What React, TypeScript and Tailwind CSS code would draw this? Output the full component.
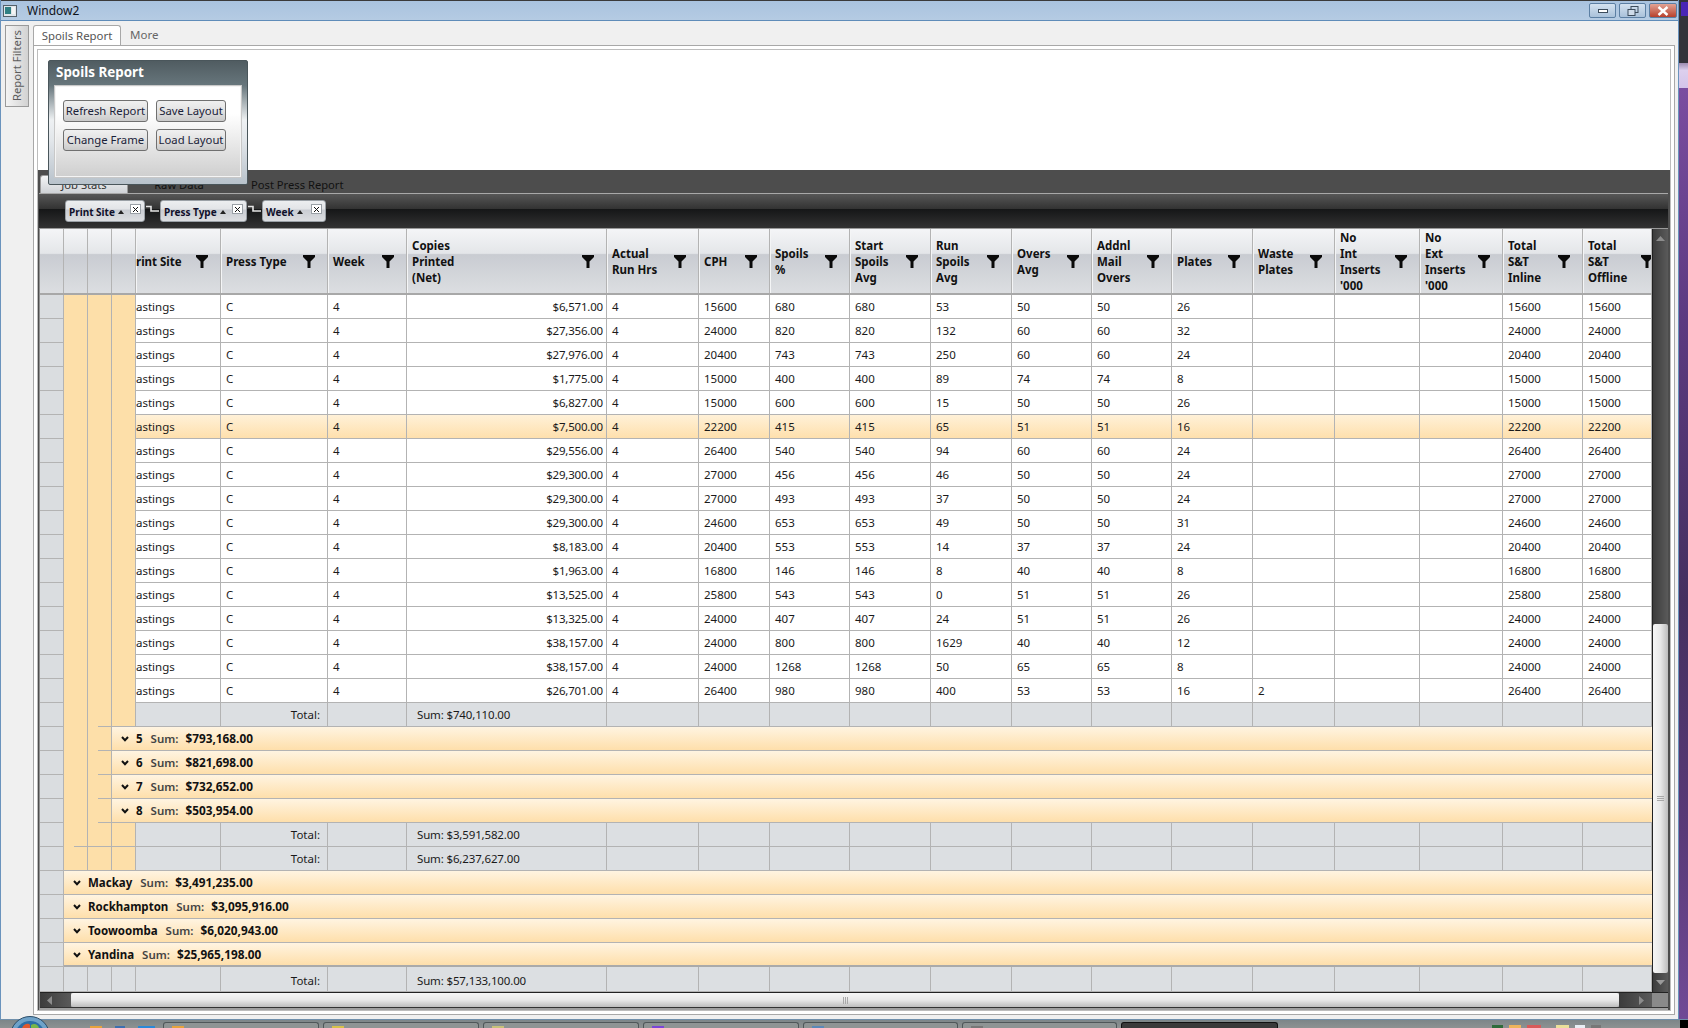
import React from "react";

const GRID =
  "grid grid-cols-[24px_24px_24px_24px_85px_107px_79px_200px_92px_71px_80px_81px_81px_80px_80px_81px_82px_85px_83px_80px_69px]";
const FONT = "font-['Noto_Sans',sans-serif]";

const HEADERS: string[][] = [
  ["rint Site"],
  ["Press Type"],
  ["Week"],
  ["Copies", "Printed", "(Net)"],
  ["Actual", "Run Hrs"],
  ["CPH"],
  ["Spoils", "%"],
  ["Start", "Spoils", "Avg"],
  ["Run", "Spoils", "Avg"],
  ["Overs", "Avg"],
  ["Addnl", "Mail", "Overs"],
  ["Plates"],
  ["Waste", "Plates"],
  ["No", "Int", "Inserts", "'000"],
  ["No", "Ext", "Inserts", "'000"],
  ["Total", "S&T", "Inline"],
  ["Total", "S&T", "Offline"],
];

type R = [string, string, string, string, string, string, string, string, string?];
const ROWS: R[] = [
  ["$6,571.00", "15600", "680", "680", "53", "50", "50", "26"],
  ["$27,356.00", "24000", "820", "820", "132", "60", "60", "32"],
  ["$27,976.00", "20400", "743", "743", "250", "60", "60", "24"],
  ["$1,775.00", "15000", "400", "400", "89", "74", "74", "8"],
  ["$6,827.00", "15000", "600", "600", "15", "50", "50", "26"],
  ["$7,500.00", "22200", "415", "415", "65", "51", "51", "16"],
  ["$29,556.00", "26400", "540", "540", "94", "60", "60", "24"],
  ["$29,300.00", "27000", "456", "456", "46", "50", "50", "24"],
  ["$29,300.00", "27000", "493", "493", "37", "50", "50", "24"],
  ["$29,300.00", "24600", "653", "653", "49", "50", "50", "31"],
  ["$8,183.00", "20400", "553", "553", "14", "37", "37", "24"],
  ["$1,963.00", "16800", "146", "146", "8", "40", "40", "8"],
  ["$13,525.00", "25800", "543", "543", "0", "51", "51", "26"],
  ["$13,325.00", "24000", "407", "407", "24", "51", "51", "26"],
  ["$38,157.00", "24000", "800", "800", "1629", "40", "40", "12"],
  ["$38,157.00", "24000", "1268", "1268", "50", "65", "65", "8"],
  ["$26,701.00", "26400", "980", "980", "400", "53", "53", "16", "2"],
];

const LINE = "border-[#b3b3b3]";

function Funnel({ clipped }: { clipped?: boolean }) {
  return (
    <svg width="12" height="13" viewBox="0 0 12 13" className={`shrink-0 ${clipped ? "-mr-[14px]" : ""}`}>
      <path d="M0 0H12V2L7.5 6.5V13H4.5V6.5L0 2Z" fill="#0a0a0a" />
    </svg>
  );
}

function Chevron() {
  return (
    <svg width="8" height="6" viewBox="0 0 8 6" className="shrink-0">
      <path d="M1 1L4 4.2L7 1" fill="none" stroke="#111" strokeWidth="2" />
    </svg>
  );
}

function Gutter() {
  return <div className={`bg-[#dadde0] border-r border-b ${LINE}`} />;
}

function Indent({ line = "", width = "" }: { line?: string; width?: string }) {
  return (
    <div className={`bg-[#fddfa9] border-r ${LINE} flex flex-col justify-end items-end ${width}`}>
      {line && <div className={`h-px bg-[#b3b3b3] ${line}`} />}
    </div>
  );
}

function HeaderCell({ lines, first, last }: { lines: string[]; first?: boolean; last?: boolean }) {
  return (
    <div
      className={`flex items-center justify-between ${first ? "pl-0" : "pl-[5px]"} pr-[12px] border-r border-[#b3b3b3] shadow-[inset_1px_0_0_#f4f5f6] overflow-hidden min-w-0`}
    >
      <div className="font-bold text-[11.5px] leading-[16px] text-[#111] whitespace-nowrap pt-[2px]">
        {lines.map((l) => (
          <div key={l}>{l}</div>
        ))}
      </div>
      <Funnel clipped={last} />
    </div>
  );
}

function Header() {
  return (
    <div
      className={`${GRID} h-[66px] border-b-2 border-[#a8a8a8] bg-[linear-gradient(#f4f5f7_0%,#e4e6e9_38%,#c9ccd2_40%,#dcdee1_100%)]`}
    >
      <div className={`border-r ${LINE}`} />
      <div className={`border-r ${LINE}`} />
      <div className={`border-r ${LINE}`} />
      <div className={`border-r ${LINE}`} />
      {HEADERS.map((h, i) => (
        <HeaderCell key={i} lines={h} first={i === 0} last={i === HEADERS.length - 1} />
      ))}
    </div>
  );
}

function DataCell({ children, right, first }: { children?: React.ReactNode; right?: boolean; first?: boolean }) {
  return (
    <div
      className={`flex items-center pt-[1px] border-r border-b ${LINE} whitespace-nowrap overflow-hidden ${
        right ? "justify-end pr-[3px] tracking-[-0.2px]" : first ? "pl-0" : "pl-[5px]"
      }`}
    >
      {children}
    </div>
  );
}

function DataRow({ r, hi }: { r: R; hi?: boolean }) {
  const bg = hi ? "bg-[linear-gradient(#fff1d8,#fedfab)]" : "bg-white";
  return (
    <div className={`${GRID} h-[24px]`}>
      <Gutter />
      <Indent />
      <Indent />
      <Indent />
      <div className={`col-[5/-1] grid grid-cols-subgrid ${bg}`}>
        <DataCell first>astings</DataCell>
        <DataCell>C</DataCell>
        <DataCell>4</DataCell>
        <DataCell right>{r[0]}</DataCell>
        <DataCell>4</DataCell>
        <DataCell>{r[1]}</DataCell>
        <DataCell>{r[2]}</DataCell>
        <DataCell>{r[3]}</DataCell>
        <DataCell>{r[4]}</DataCell>
        <DataCell>{r[5]}</DataCell>
        <DataCell>{r[6]}</DataCell>
        <DataCell>{r[7]}</DataCell>
        <DataCell>{r[8]}</DataCell>
        <DataCell />
        <DataCell />
        <DataCell>{r[1]}</DataCell>
        <DataCell>{r[1]}</DataCell>
      </div>
    </div>
  );
}

function TotalRow({
  sum,
  indents,
  last,
}: {
  sum: string;
  indents: React.ReactNode;
  last?: boolean;
}) {
  const cell = `bg-[#dcdfe2] border-r border-b ${LINE}`;
  return (
    <div className={`${GRID} ${last ? "h-[25px]" : "h-[24px]"}`}>
      <Gutter />
      {indents}
      <div className={cell} />
      <div className={`${cell} flex items-center justify-end pr-[7px] ${last ? "pt-[3px]" : ""}`}>Total:</div>
      <div className={cell} />
      <div className={`${cell} flex items-center pl-[10px] whitespace-nowrap tracking-[-0.15px] ${last ? "pt-[3px]" : ""}`}>
        {sum}
      </div>
      {Array.from({ length: 13 }).map((_, i) => (
        <div key={i} className={cell} />
      ))}
    </div>
  );
}

function GroupRow({ label, sum, level, thick }: { label: string; sum: string; level: 1 | 3; thick?: boolean }) {
  return (
    <div className="flex h-[24px]">
      <div className={`w-[24px] bg-[#dadde0] border-r border-b ${LINE}`} />
      {level === 3 && (
        <>
          <Indent width="w-[24px]" />
          <Indent width="w-[24px]" line="w-[13px]" />
        </>
      )}
      <div
        className={`flex-1 flex items-center pl-[9px] ${
          thick ? "border-b-2 border-[#aaaaaa] pt-[1px]" : `border-b ${LINE}`
        } bg-[linear-gradient(#fff4e1,#fedfab)] text-[11.5px] whitespace-nowrap text-[#111]`}
      >
        <Chevron />
        <span className="font-bold ml-[7px]">{label}</span>
        <span className="font-semibold text-[#444] ml-[8px]">Sum:</span>
        <span className="font-bold ml-[7px] text-[11.8px]">{sum}</span>
      </div>
    </div>
  );
}

function VScroll() {
  return (
    <div className="w-[16px] border-l border-[#222] bg-[linear-gradient(90deg,#3c3c3c,#5a5a5a)] flex flex-col">
      <div className="h-[395px] flex justify-center pt-[7px]">
        <svg width="9" height="5" viewBox="0 0 9 5">
          <path d="M4.5 0L9 5H0Z" fill="#8c8c8c" />
        </svg>
      </div>
      <div className="h-[349px] rounded-[2px] bg-[linear-gradient(90deg,#f6f6f6,#e8e8e8_50%,#bdbdbd)] flex flex-col items-center pt-[172px] gap-[1px]">
        <div className="w-[7px] h-px bg-[#a8a8a8]" />
        <div className="w-[7px] h-px bg-[#a8a8a8]" />
        <div className="w-[7px] h-px bg-[#a8a8a8]" />
      </div>
      <div className="flex-1 flex justify-center items-center">
        <svg width="9" height="5" viewBox="0 0 9 5">
          <path d="M4.5 5L9 0H0Z" fill="#9a9a9a" />
        </svg>
      </div>
    </div>
  );
}

function HScroll() {
  return (
    <div className="h-[16px] flex border-t border-[#222] border-b border-b-[#333]">
      <div className="w-[31px] bg-[linear-gradient(90deg,#3c3c3c,#5a5a5a)] flex items-center pl-[7px]">
        <svg width="5" height="9" viewBox="0 0 5 9">
          <path d="M0 4.5L5 0V9Z" fill="#8c8c8c" />
        </svg>
      </div>
      <div className="w-[1548px] rounded-[2px] bg-[linear-gradient(#f6f6f6,#e8e8e8_50%,#bdbdbd)] flex items-center justify-center gap-[1px]">
        <div className="w-px h-[7px] bg-[#a8a8a8]" />
        <div className="w-px h-[7px] bg-[#a8a8a8]" />
        <div className="w-px h-[7px] bg-[#a8a8a8]" />
      </div>
      <div className="flex-1 bg-[linear-gradient(90deg,#3c3c3c,#5a5a5a)] flex items-center justify-end pr-[8px]">
        <svg width="5" height="9" viewBox="0 0 5 9">
          <path d="M5 4.5L0 0V9Z" fill="#8c8c8c" />
        </svg>
      </div>
      <div className="w-[16px] bg-[#8a8a8a]" />
    </div>
  );
}

function Chip({ label, w }: { label: string; w: string }) {
  return (
    <div
      className={`${w} h-[22px] rounded-[3px] border border-[#9aa0a6] bg-[linear-gradient(#eceef0_0%,#e2e4e7_40%,#c9ccd2_45%,#dcdee1_100%)] flex pl-[3px] pr-[3px]`}
    >
      <span className="text-[10px] font-bold text-[#10102a] self-center whitespace-nowrap pt-[3px]">{label}</span>
      <svg width="6" height="4" viewBox="0 0 6 4" className="self-center ml-[3px] mt-[1px]">
        <path d="M3 0L6 4H0Z" fill="#222" />
      </svg>
      <div className="ml-auto mt-[3px] w-[11px] h-[10px] bg-white border border-[#9aa0a6] flex items-center justify-center">
        <svg width="7" height="7" viewBox="0 0 7 7">
          <path d="M1 1L6 6M6 1L1 6" stroke="#111" strokeWidth="1" />
        </svg>
      </div>
    </div>
  );
}

function Connector() {
  return (
    <svg width="15" height="8" viewBox="0 0 15 8" className="shrink-0">
      <path d="M1 1.5H6V6H14" fill="none" stroke="#e4e4e4" strokeWidth="1.6" />
    </svg>
  );
}

function RibbonButton({ children, w }: { children: React.ReactNode; w: string }) {
  return (
    <div
      className={`${w} h-[22px] rounded-[3px] border border-[#707070] bg-[linear-gradient(#f0f0f0,#e2e2e2_50%,#cacaca)] flex items-center justify-center text-[11.3px] text-[#1a2238] whitespace-nowrap`}
    >
      {children}
    </div>
  );
}

function WinBtn({ w, bg, children }: { w: string; bg: string; children: React.ReactNode }) {
  return (
    <div className={`${w} h-[15px] rounded-[2px] border border-[#5c7fa3] ${bg} flex items-center justify-center`}>
      {children}
    </div>
  );
}

function TaskButton({ w, color, dark }: { w: string; color?: string; dark?: boolean }) {
  return (
    <div
      className={`${w} h-[6px] rounded-t-[3px] border border-b-0 ${
        dark ? "border-[#111] bg-[#3a3a3a]" : "border-[#4f5759] bg-[#8e9494]"
      } pl-[8px] pt-[3px]`}
    >
      {color && <div className={`w-[12px] h-[3px] ${color}`} />}
    </div>
  );
}

export default function App() {
  const orange = `bg-[#fddfa9] border-r border-b ${LINE}`;
  const gray = `bg-[#dcdfe2] border-r border-b ${LINE}`;
  return (
    <div className={`${FONT} relative w-[1688px] h-[1028px] overflow-hidden flex flex-col text-[11.5px] text-[#1a1a1a]`}>
      <div className="flex h-[1019px]">
        {/* window */}
        <div className="w-[1679px] flex flex-col bg-[#f0f0f0] border-l border-r border-[#6a93bd]">
          {/* title bar */}
          <div className="h-[21px] border-t border-[#3a3a3a] border-b border-b-[#5f8cb9] bg-[linear-gradient(#a9c3df,#b5cbe3)] flex items-center pl-[2px] pr-[1px]">
            <svg width="14" height="12" viewBox="0 0 14 12" className="shrink-0">
              <rect x="0.5" y="0.5" width="13" height="11" fill="#dfe6ea" stroke="#55606a" />
              <rect x="2" y="2" width="6" height="7" fill="#2f7f83" />
              <rect x="9" y="2" width="3" height="7" fill="#f4f4f4" />
            </svg>
            <span className="ml-[10px] text-[12px] text-[#10131a]">Window2</span>
            <div className="ml-auto flex gap-[3px]">
              <WinBtn w="w-[27px]" bg="bg-[linear-gradient(#d4e2f0,#a9c1da)]">
                <div className="w-[10px] h-[4px] border border-[#3c4c5c] bg-white" />
              </WinBtn>
              <WinBtn w="w-[27px]" bg="bg-[linear-gradient(#d4e2f0,#a9c1da)]">
                <svg width="12" height="10" viewBox="0 0 12 10">
                  <rect x="4" y="0.5" width="7" height="6" fill="none" stroke="#3c4c5c" />
                  <rect x="1" y="3.5" width="7" height="6" fill="#cfdcea" stroke="#3c4c5c" />
                </svg>
              </WinBtn>
              <WinBtn w="w-[28px]" bg="bg-[linear-gradient(#e2a394,#b8402c)]">
                <svg width="12" height="10" viewBox="0 0 12 10">
                  <path d="M1.5 1L10.5 9M10.5 1L1.5 9" stroke="#fff" strokeWidth="2.4" />
                </svg>
              </WinBtn>
            </div>
          </div>

          {/* body */}
          <div className="flex-1 flex min-h-0 pt-[4px] pb-[4px]">
            <div className="w-[32px] pl-[4px]">
              <div className="w-[24px] h-[82px] border border-[#9a9a9a] bg-[linear-gradient(90deg,#f4f4f4,#d2d2d2)] flex items-center justify-center">
                <span className="[writing-mode:vertical-rl] rotate-180 text-[11.3px] text-[#5c5c5c] whitespace-nowrap">
                  Report Filters
                </span>
              </div>
            </div>

            <div className="w-[1642px] flex flex-col">
              {/* top tabs */}
              <div className="h-[20px] flex items-end">
                <div className="w-[88px] h-[20px] border border-b-0 border-[#a8a8a8] rounded-t-[3px] bg-white flex items-center justify-center text-[11.4px] text-[#555]">
                  Spoils Report
                </div>
                <div className="ml-[9px] h-[20px] flex items-center text-[11.5px] text-[#666]">More</div>
              </div>
              <div className="flex-1 min-h-0 border border-[#a8a8a8] bg-white p-[3px] flex flex-col">
                <div className="flex-1 min-h-0 border border-[#bdbdbd] flex flex-col bg-[#4d4d4d]">
                  <div className="h-[120px] bg-white" />
                  {/* inner tabs */}
                  <div className="h-[23px] flex items-end pl-[2px] text-[11.2px]">
                    <div className="w-[88px] h-[18px] rounded-t-[3px] border border-b-0 border-[#9a9a9a] bg-[linear-gradient(#f4f5f6,#cfd2d6)] flex items-center justify-center text-[#333] pt-[1px]">
                      Job Stats
                    </div>
                    <div className="w-[102px] h-[18px] flex items-center justify-center text-[#111] pt-[3px]">Raw Data</div>
                    <div className="ml-[21px] h-[18px] flex items-center text-[#111] pt-[3px]">Post Press Report</div>
                  </div>
                  {/* frame */}
                  <div className="flex-1 min-h-0 ml-[1px] mr-[2px] border-t border-[#a8a8a8] bg-[#8f8f8f] flex flex-col">
                    {/* group panel */}
                    <div className="h-[35px] border-b border-[#9a9a9a] bg-[linear-gradient(#575757_0%,#333_43%,#151617_44%,#333_100%)] flex items-start pl-[26px] pt-[6px]">
                      <Chip label="Print Site" w="w-[80px]" />
                      <div className="self-stretch flex items-center pb-[10px]"><Connector /></div>
                      <Chip label="Press Type" w="w-[87px]" />
                      <div className="self-stretch flex items-center pb-[10px]"><Connector /></div>
                      <Chip label="Week" w="w-[64px]" />
                    </div>
                    {/* grid + scrollbars */}
                    <div className="ml-[1px] flex h-[763px]">
                      <div className="w-[1612px] bg-white overflow-hidden flex flex-col">
                        <Header />
                        {ROWS.map((r, i) => (
                          <DataRow key={i} r={r} hi={i === 5} />
                        ))}
                        <TotalRow
                          sum="Sum: $740,110.00"
                          indents={
                            <>
                              <Indent />
                              <Indent line="w-[13px]" />
                              <div className={orange} />
                            </>
                          }
                        />
                        <GroupRow level={3} label="5" sum="$793,168.00" />
                        <GroupRow level={3} label="6" sum="$821,698.00" />
                        <GroupRow level={3} label="7" sum="$732,652.00" />
                        <GroupRow level={3} label="8" sum="$503,954.00" />
                        <TotalRow
                          sum="Sum: $3,591,582.00"
                          indents={
                            <>
                              <Indent line="w-[13px]" />
                              <div className={orange} />
                              <div className={orange} />
                            </>
                          }
                        />
                        <TotalRow
                          sum="Sum: $6,237,627.00"
                          indents={
                            <>
                              <div className={orange} />
                              <div className={orange} />
                              <div className={orange} />
                            </>
                          }
                        />
                        <GroupRow level={1} label="Mackay" sum="$3,491,235.00" />
                        <GroupRow level={1} label="Rockhampton" sum="$3,095,916.00" />
                        <GroupRow level={1} label="Toowoomba" sum="$6,020,943.00" />
                        <GroupRow level={1} label="Yandina" sum="$25,965,198.00" thick />
                        <TotalRow
                          last
                          sum="Sum: $57,133,100.00"
                          indents={
                            <>
                              <div className={gray} />
                              <div className={gray} />
                              <div className={gray} />
                            </>
                          }
                        />
                      </div>
                      <VScroll />
                    </div>
                    <div className="ml-[1px]">
                      <HScroll />
                    </div>
                    <div className="flex-1 bg-[#a0a0a0]" />
                  </div>
                </div>
              </div>
            </div>
          </div>
        </div>

        {/* desktop edge */}
        <div className="flex-1 flex flex-col">
          <div className="h-[63px] bg-[#33333a] pt-[2px]">
            <div className="h-[14px] ml-[2px] bg-[#4a25b5]" />
          </div>
          <div className="h-[25px] bg-[linear-gradient(#9c8cb0,#ddd0ee_30%,#d4c4ea)]" />
          <div className="flex-1 bg-[linear-gradient(#7a4da0_0%,#5c3a80_25%,#45305f_55%,#5a3a78_80%,#704a96_100%)]" />
        </div>
      </div>

      {/* task bar */}
      <div className="h-[9px] border-t border-[#6f8fab] bg-[linear-gradient(#7d8688,#8d9292)] flex items-start pl-[90px]">
        <div className="flex gap-[13px] pt-[6px]">
          <div className="w-[12px] h-[2px] bg-[#e8a33c]" />
          <div className="w-[10px] h-[2px] bg-[#3d6fb0]" />
          <div className="w-[17px] h-[2px] bg-[#2a88d8]" />
        </div>
        <div className="ml-[8px] pt-[2px] flex gap-[4px]">
          <TaskButton w="w-[156px]" color="bg-[#e8a33c]" />
          <TaskButton w="w-[156px]" color="bg-[#d8c24a]" />
          <TaskButton w="w-[156px]" color="bg-[#c9c27a]" />
          <TaskButton w="w-[156px]" color="bg-[#7a44d8]" />
          <TaskButton w="w-[155px]" color="bg-[#5a88b8]" />
          <TaskButton w="w-[155px]" color="bg-[#777]" />
          <TaskButton w="w-[157px]" dark />
        </div>
        <div className="ml-[214px] pt-[5px] flex gap-[6px]">
          <div className="w-[11px] h-[3px] bg-[#2f6b3a]" />
          <div className="w-[12px] h-[3px] bg-[#efb45c]" />
          <div className="w-[14px] h-[3px] bg-[#d85a5a]" />
          <div className="ml-[9px] w-[13px] h-[3px] bg-[#eadf9a]" />
          <div className="w-[10px] h-[3px] bg-[#e8eef4]" />
          <div className="w-[10px] h-[3px] bg-[#777]" />
        </div>
        <div className="ml-auto w-[8px] h-full bg-black" />
      </div>

      {/* start orb, overlapping the task bar */}
      <svg width="40" height="12" viewBox="0 0 40 12" className="absolute left-[10px] top-[1016px]">
        <ellipse cx="20" cy="20" rx="19.5" ry="19.5" fill="#6ea2c9" stroke="#2c4d68" />
        <ellipse cx="20" cy="20" rx="15" ry="15" fill="#2c6ea6" />
        <path d="M12 12C14 7 19 7 20 9V12Z" fill="#e0582e" />
        <path d="M21 9C24 7 28 8 29 12H21Z" fill="#7ab648" />
      </svg>

      {/* ribbon popup, overlapping the tabs */}
      <div className="absolute left-[48px] top-[60px] w-[200px] h-[125px] rounded-[2px] border border-[#4a565b] bg-[linear-gradient(#505c61_0%,#67767c_20%,#eef1f3_48%,#e2e6ea_65%,#b8c2cb_100%)] flex flex-col px-[6px] pb-[7px]">
        <div className="h-[25px] flex items-center pl-[1px] pb-[2px] text-[13.4px] font-bold text-white whitespace-nowrap">Spoils Report</div>
        <div className="flex-1 border border-[#f4f4f4] outline outline-1 outline-[#c8c8c8] bg-[linear-gradient(#ffffff_0%,#ffffff_30%,#f2f2f2_50%,#cfcfcf_100%)] pl-[7px] pt-[13px]">
          <div className="grid grid-cols-[85px_70px] gap-x-[8px] gap-y-[7px]">
            <RibbonButton w="w-[85px]">Refresh Report</RibbonButton>
            <RibbonButton w="w-[70px]">Save Layout</RibbonButton>
            <RibbonButton w="w-[85px]">Change Frame</RibbonButton>
            <RibbonButton w="w-[70px]">Load Layout</RibbonButton>
          </div>
        </div>
      </div>
    </div>
  );
}
